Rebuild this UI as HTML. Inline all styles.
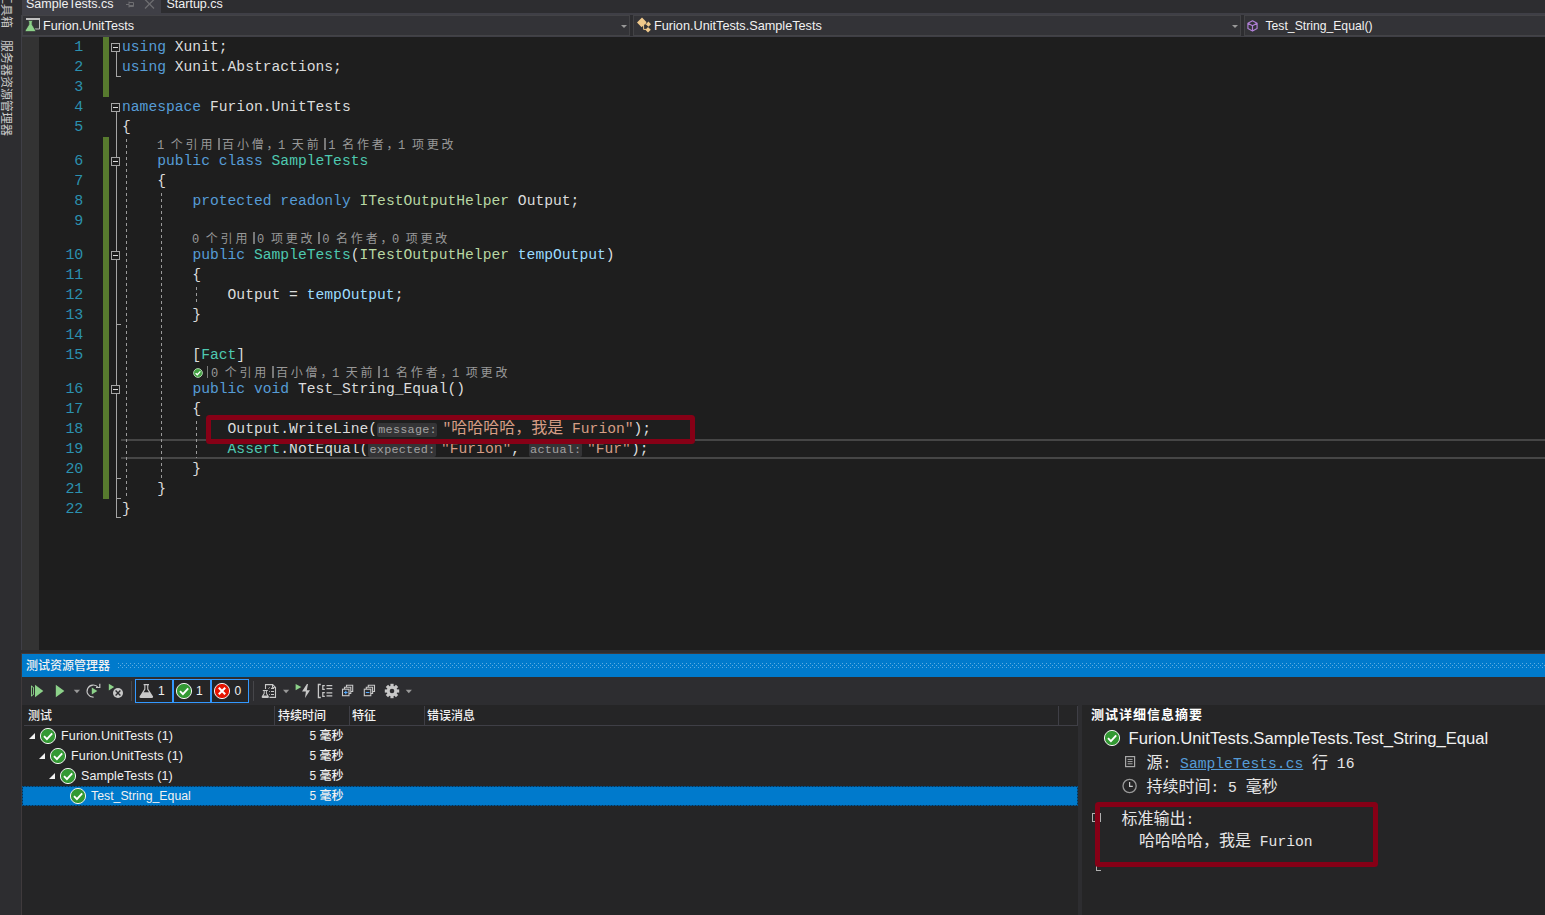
<!DOCTYPE html>
<html lang="zh-CN">
<head>
<meta charset="utf-8">
<title>SampleTests.cs</title>
<style>
*{box-sizing:border-box;margin:0;padding:0}
html,body{width:1545px;height:915px;overflow:hidden;background:#2d2d30}
body{position:relative;font-family:"Liberation Sans","Noto Sans CJK SC",sans-serif;font-size:12px;color:#f1f1f1}
.abs{position:absolute}
.ui{font-family:"Liberation Sans","Noto Sans CJK SC",sans-serif;font-size:12px;font-weight:500;color:#f1f1f1;white-space:nowrap;line-height:16px}
.mono{font-family:"Liberation Mono","Noto Sans CJK SC",monospace;white-space:pre}
/* sidebar */
#side{left:0;top:0;width:22px;height:915px;background:#2d2d30}
/* tabs */
#tabstrip{left:22px;top:0;width:1523px;height:13px;background:#2d2d30}
#tabactive{left:22px;top:0;width:139px;height:13px;background:#3f3f46}
#tabline{left:22px;top:13px;width:1523px;height:2px;background:#3f3f46}
/* navbar */
#nav{left:22px;top:15px;width:1523px;height:22px;background:#2d2d30;border-bottom:1px solid #3f3f46}
.navbox{position:absolute;top:15px;height:21px;background:#333337;border:1px solid #434346}
.arrow{position:absolute;width:0;height:0;border-left:3.5px solid transparent;border-right:3.5px solid transparent;border-top:3.5px solid #999}
/* editor */
#editor{left:22px;top:37px;width:1523px;height:613px;background:#1e1e1e}
#emargin{left:22px;top:37px;width:17px;height:613px;background:#333333}
#greenA{left:103px;top:37px;width:6px;height:60px;background:#577a2e}
#greenB{left:103px;top:137px;width:6px;height:362px;background:#577a2e}
.ln{position:absolute;left:42px;width:41px;text-align:right;color:#2b91af;font-size:15px;line-height:20px;height:20px;margin-top:1px;letter-spacing:-.2px}
.cl{position:absolute;left:122px;color:#dcdcdc;font-size:14.67px;line-height:20px;height:20px}
.lens{position:absolute;color:#999;font-size:12px;line-height:14px;height:14px;letter-spacing:2.8px;font-family:"Noto Sans CJK SC",sans-serif;white-space:pre}
.ll{font-family:"Liberation Mono",monospace;font-size:12px;letter-spacing:-0.3px}
.cm{letter-spacing:-0.5px}
.sp{display:inline-block;width:1.8px;height:12px;background:#787878;margin:0 2.5px 0 2.6px;vertical-align:-0.5px}
.cj{font-size:16px;line-height:0;font-family:"Noto Sans CJK SC",sans-serif}
.dt{font-size:14.67px;line-height:22px;color:#e6e6e6}
.k{color:#569cd6}.t{color:#4ec9b0}.i{color:#b8d7a3}.s{color:#d69d85}.p{color:#9cdcfe}
.h{display:inline-block;background:#343436;color:#a2a2a2;font-size:11.8px;line-height:15.4px;height:13.5px;padding:0 .5px 0 1.2px;margin:0 5px 0 0;border-radius:2px;vertical-align:0;letter-spacing:.25px}
.ob{position:absolute;left:111px;width:9px;height:9px;border:1px solid #a5a5a5;background:#1e1e1e}
.ob:after{content:"";position:absolute;left:1px;top:3px;width:5px;height:1px;background:#dcdcdc}
.vl{position:absolute;width:1px;background:#a5a5a5}
.hl{position:absolute;height:1px;background:#a5a5a5}
.dg{position:absolute;width:1px;background-image:linear-gradient(#9a9a9a 50%,transparent 50%);background-size:1px 6px}
/* bottom */
#gap{left:22px;top:650px;width:1523px;height:4px;background:#2d2d30}
#ttl{left:22px;top:654px;width:1523px;height:23px;background:#007acc}
#tbar{left:22px;top:677px;width:1523px;height:28px;background:#2d2d30}
#list{left:22px;top:705px;width:1056px;height:210px;background:#252526}
#split{left:1078px;top:705px;width:4px;height:210px;background:#2d2d30}
#det{left:1082px;top:705px;width:463px;height:210px;background:#252526}
.redbox{position:absolute;border:5px solid #860016;border-radius:3.5px}
</style>
</head>
<body>
<div id="side" class="abs"></div>
<div id="tabstrip" class="abs"></div>
<div id="tabactive" class="abs"></div>
<div id="tabline" class="abs"></div>
<div id="nav" class="abs"></div>
<div id="editor" class="abs"></div>
<div id="emargin" class="abs"></div>
<div id="greenA" class="abs"></div>
<div id="greenB" class="abs"></div>
<div class="abs ui" style="left:12px;top:-8px;height:13px;line-height:13px;font-size:12px;font-weight:400;color:#c8c8c8;transform-origin:0 0;transform:rotate(90deg)">工具箱<span style="display:inline-block;width:12px"></span>服务器资源管理器</div>
<div class="abs ui" style="left:26px;top:-4px;font-size:12.5px">SampleTests.cs</div>
<div class="abs ui" style="left:166.5px;top:-4px;font-size:12.5px">Startup.cs</div>
<svg class="abs" style="left:125px;top:0" width="10" height="9" viewBox="0 0 10 9"><path d="M1 4.5H4M4 1.5V7.5M4 2.5H8.5V6.5H4M4 5.5H8.5" stroke="#6d6d70" stroke-width="1" fill="none"/></svg>
<svg class="abs" style="left:144px;top:-1px" width="11" height="11" viewBox="0 0 11 11"><path d="M1 0.5L10 9.5M10 0.5L1 9.5" stroke="#6d6d70" stroke-width="1.3" fill="none"/></svg>
<div class="navbox" style="left:22px;width:608px"></div>
<div class="navbox" style="left:633px;width:608px"></div>
<div class="navbox" style="left:1244px;width:302px"></div>
<div class="arrow" style="left:620.5px;top:25px"></div>
<div class="arrow" style="left:1231.5px;top:25px"></div>
<svg class="abs" style="left:25px;top:17px" width="16" height="15" viewBox="0 0 16 15"><path d="M1.5 2H14.5V12H10" stroke="#c0c0c0" stroke-width="1" fill="none"/><path d="M1 2H15" stroke="#c0c0c0" stroke-width="2"/><path d="M3.4 3.6H7.6V4.8H7.1V7.6L10.4 13.2V14.6H0.4V13.2L3.9 7.6V4.8H3.4Z" fill="#8dd28a" stroke="#333337" stroke-width="0.7"/></svg>
<div class="abs ui" style="left:43px;top:17.5px;font-size:12.6px">Furion.UnitTests</div>
<svg class="abs" style="left:636px;top:17px" width="16" height="16" viewBox="0 0 16 16"><g fill="#f0c98b"><path d="M6 0.6L10.6 5.2L5.6 10.2L1 5.6Z"/><path d="M12.4 4.6L15 7.2L12.4 9.8L9.8 7.2Z"/><path d="M12 10L14.8 12.8L12 15.4L9.4 12.8Z"/></g><path d="M8 6.8H10M7.6 7V12.4H10" stroke="#f0c98b" stroke-width="1" fill="none"/></svg>
<div class="abs ui" style="left:654px;top:17.5px;font-size:12.7px">Furion.UnitTests.SampleTests</div>
<svg class="abs" style="left:1247px;top:19.5px" width="11" height="12" viewBox="0 0 12 13"><path d="M6 0.8L11 3.4V9.2L6 12L1 9.2V3.4Z M1 3.4L6 6.2L11 3.4M6 6.2V12" stroke="#b180d7" stroke-width="1.3" fill="none" stroke-linejoin="round"/></svg>
<div class="abs ui" style="left:1265.5px;top:17.5px;font-size:12.2px">Test_String_Equal()</div>
<!--EDITOR-->
<div class="abs" style="left:121px;top:439px;width:1424px;height:20px;border-top:2px solid #464646;border-bottom:2px solid #464646"></div>
<svg class="abs" style="left:193px;top:368px" width="10" height="10" viewBox="0 0 10 10"><circle cx="5" cy="5" r="4.4" fill="#3f9f3f" stroke="#b9d9b9" stroke-width="0.9"/><path d="M2.6 5.2 L4.3 6.8 L7.4 3.4" stroke="#fff" stroke-width="1.3" fill="none"/></svg>
<div class="ob" style="top:43px"></div>
<div class="ob" style="top:103px"></div>
<div class="ob" style="top:157px"></div>
<div class="ob" style="top:251px"></div>
<div class="ob" style="top:385px"></div>
<div class="vl" style="left:116px;top:52px;height:25px"></div>
<div class="hl" style="left:116px;top:76px;width:5px"></div>
<div class="vl" style="left:116px;top:112px;height:45px"></div>
<div class="vl" style="left:116px;top:166px;height:85px"></div>
<div class="vl" style="left:116px;top:260px;height:125px"></div>
<div class="vl" style="left:116px;top:394px;height:124px"></div>
<div class="hl" style="left:116px;top:324px;width:5px"></div>
<div class="hl" style="left:116px;top:478px;width:5px"></div>
<div class="hl" style="left:116px;top:498px;width:5px"></div>
<div class="hl" style="left:116px;top:517px;width:5px"></div>
<div class="dg" style="left:126px;top:139px;height:359px"></div>
<div class="dg" style="left:161px;top:193px;height:285px"></div>
<div class="dg" style="left:196px;top:287px;height:16px"></div>
<div class="dg" style="left:196px;top:421px;height:37px"></div>

<div class="ln mono" style="top:37px">1</div>
<div class="cl mono" style="top:37px"><span class="k">using</span> Xunit;</div>
<div class="ln mono" style="top:57px">2</div>
<div class="cl mono" style="top:57px"><span class="k">using</span> Xunit.Abstractions;</div>
<div class="ln mono" style="top:77px">3</div>
<div class="ln mono" style="top:97px">4</div>
<div class="cl mono" style="top:97px"><span class="k">namespace</span> Furion.UnitTests</div>
<div class="ln mono" style="top:117px">5</div>
<div class="cl mono" style="top:117px">{</div>
<div class="ln mono" style="top:151px">6</div>
<div class="cl mono" style="top:151px">    <span class="k">public</span> <span class="k">class</span> <span class="t">SampleTests</span></div>
<div class="ln mono" style="top:171px">7</div>
<div class="cl mono" style="top:171px">    {</div>
<div class="ln mono" style="top:191px">8</div>
<div class="cl mono" style="top:191px">        <span class="k">protected</span> <span class="k">readonly</span> <span class="i">ITestOutputHelper</span> Output;</div>
<div class="ln mono" style="top:211px">9</div>
<div class="ln mono" style="top:245px">10</div>
<div class="cl mono" style="top:245px">        <span class="k">public</span> <span class="t">SampleTests</span>(<span class="i">ITestOutputHelper</span> <span class="p">tempOutput</span>)</div>
<div class="ln mono" style="top:265px">11</div>
<div class="cl mono" style="top:265px">        {</div>
<div class="ln mono" style="top:285px">12</div>
<div class="cl mono" style="top:285px">            Output = <span class="p">tempOutput</span>;</div>
<div class="ln mono" style="top:305px">13</div>
<div class="cl mono" style="top:305px">        }</div>
<div class="ln mono" style="top:325px">14</div>
<div class="ln mono" style="top:345px">15</div>
<div class="cl mono" style="top:345px">        [<span class="t">Fact</span>]</div>
<div class="ln mono" style="top:379px">16</div>
<div class="cl mono" style="top:379px">        <span class="k">public</span> <span class="k">void</span> Test_String_Equal()</div>
<div class="ln mono" style="top:399px">17</div>
<div class="cl mono" style="top:399px">        {</div>
<div class="ln mono" style="top:419px">18</div>
<div class="cl mono" style="top:419px">            Output.WriteLine(<span class="h">message:</span><span class="s">"<span class="cj">哈哈哈哈，我是</span> Furion"</span>);</div>
<div class="ln mono" style="top:439px">19</div>
<div class="cl mono" style="top:439px">            <span class="t">Assert</span>.NotEqual(<span class="h">expected:</span><span class="s">"Furion"</span>, <span class="h">actual:</span><span class="s">"Fur"</span>);</div>
<div class="ln mono" style="top:459px">20</div>
<div class="cl mono" style="top:459px">        }</div>
<div class="ln mono" style="top:479px">21</div>
<div class="cl mono" style="top:479px">    }</div>
<div class="ln mono" style="top:499px">22</div>
<div class="cl mono" style="top:499px">}</div>
<div class="lens" style="left:157px;top:137px"><span class="ll">1 </span>个引用<span class="sp"></span>百小僧<span class="cm">，</span><span class="ll">1 </span>天前<span class="sp"></span><span class="ll">1 </span>名作者<span class="cm">，</span><span class="ll">1 </span>项更改</div>
<div class="lens" style="left:192px;top:231px"><span class="ll">0 </span>个引用<span class="sp"></span><span class="ll">0 </span>项更改<span class="sp"></span><span class="ll">0 </span>名作者<span class="cm">，</span><span class="ll">0 </span>项更改</div>
<div class="lens" style="left:204px;top:365px"><span class="sp"></span><span class="ll">0 </span>个引用<span class="sp"></span>百小僧<span class="cm">，</span><span class="ll">1 </span>天前<span class="sp"></span><span class="ll">1 </span>名作者<span class="cm">，</span><span class="ll">1 </span>项更改</div>

<div class="redbox" style="left:206px;top:415px;width:489px;height:29px"></div>
<!--/EDITOR-->
<div id="gap" class="abs"></div>
<div id="ttl" class="abs"></div>
<div id="tbar" class="abs"></div>
<div id="list" class="abs"></div>
<div id="split" class="abs"></div>
<div id="det" class="abs"></div>
<!--BOTTOM-->
<div class="abs" style="left:21px;top:15px;width:1px;height:635px;background:#3f3f46"></div>
<div class="abs" style="left:21px;top:653px;width:1524px;height:1px;background:#41393b"></div>
<div class="abs" style="left:21px;top:653px;width:1px;height:262px;background:#3f3a3c"></div>

<div class="abs ui" style="left:26px;top:657.5px">测试资源管理器</div>
<svg class="abs" style="left:118px;top:663px" width="1427" height="5"><defs><pattern id="dots" width="4" height="4" patternUnits="userSpaceOnUse"><rect x="0" y="0" width="1" height="1" fill="#5fade2"/><rect x="2" y="2" width="1" height="1" fill="#5fade2"/></pattern></defs><rect width="1427" height="5" fill="url(#dots)"/></svg>
<!-- toolbar icons -->
<svg class="abs" style="left:22px;top:677px" width="400" height="28" viewBox="22 677 400 28">
<g fill="#8dd28a">
<path d="M31 685.2V696.8L34 694.6V687.4Z M31.9 686.9L33.1 687.8V694.2L31.9 695.1Z" fill-rule="evenodd"/>
<path d="M35 684.7L43.3 691L35 697.2Z"/>
<path d="M55.8 684.7L64.4 691L55.8 697.2Z"/>
<path d="M91.8 687.5L97.3 691L91.8 694.4Z"/>
<path d="M108.8 683.8L114.2 687.1L108.8 690.4Z"/>
<path d="M295.6 683.9L301.3 687.1L295.6 690.3Z"/>
</g>
<g fill="#999"><path d="M73.8 689.8H80L76.9 693.2Z"/><path d="M283 689.8H289.2L286.1 693.2Z"/><path d="M405.7 689.8H411.9L408.8 693.2Z"/></g>
<path d="M93.6 697.2A6.1 6.1 0 1 1 98.2 687.6" stroke="#c8c8c8" stroke-width="1.2" fill="none"/>
<path d="M96 687.5H99.8V683.8" stroke="#c8c8c8" stroke-width="1.2" fill="none"/>
<circle cx="118" cy="693" r="5" fill="#c8c8c8"/><path d="M115.6 690.6L120.4 695.4M120.4 690.6L115.6 695.4" stroke="#2d2d30" stroke-width="1.4"/>
<path d="M131.5 681V701M253.5 681V701" stroke="#46464a" stroke-width="1"/>
<g><rect x="135.5" y="679.5" width="37" height="23" fill="#252526" stroke="#3399ff"/><rect x="173.5" y="679.5" width="37" height="23" fill="#252526" stroke="#3399ff"/><rect x="211.5" y="679.5" width="37" height="23" fill="#252526" stroke="#3399ff"/></g>
<path d="M143.6 684H149V685.2H148.3V689L153.1 696.6Q153.4 698 152 698H140.6Q139.2 698 139.5 696.6L144.3 689V685.2H143.6Z M145.4 685.2V689.4L143.6 692.3H149L147.2 689.4V685.2Z" fill="#c8c8c8" fill-rule="evenodd"/>
<circle cx="184" cy="691" r="7.6" fill="#339933" stroke="#f3f3f3" stroke-width="1"/><path d="M180 691.2L182.9 694.1L188.2 688.3" stroke="#fff" stroke-width="1.9" fill="none"/>
<circle cx="222" cy="691" r="7.6" fill="#e51400" stroke="#f3f3f3" stroke-width="1"/><path d="M218.8 687.8L225.2 694.2M225.2 687.8L218.8 694.2" stroke="#fff" stroke-width="2" fill="none"/>
<!-- playlist -->
<path d="M265.5 689V684.6H272.7L275.5 687.4V697.4H269.5" stroke="#c8c8c8" stroke-width="1.1" fill="none"/><path d="M272.5 684.6V687.6H275.5" stroke="#c8c8c8" stroke-width="1" fill="none"/><path d="M271 688.4H274M271 691.5H274M271 694.5H274" stroke="#c8c8c8" stroke-width="1.2"/><path d="M269.2 691.5H270M269.2 694.5H270M268.4 688.6L269.8 687.4" stroke="#c8c8c8" stroke-width="0.9"/><path d="M262.8 689.9H267.8V690.9H266.9V693.2L268.9 696.6Q269.2 698 268 698H262.6Q261.4 698 261.7 696.6L263.7 693.2V690.9H262.8Z M264.7 690.9V693.5L263.6 695.4H267L265.9 693.5V690.9Z" fill="#c8c8c8" fill-rule="evenodd"/>
<!-- lightning -->
<path d="M306.9 683.9L302 691.5H305.9L305 698L310 690.2H306.8L308 683.9Z" fill="#c8c8c8"/>
<!-- group -->
<path d="M320.8 684.5H318.4V697.5H320.8" stroke="#c8c8c8" stroke-width="1.3" fill="none"/><path d="M324.8 685.6H322.8V689.4H324.8M324.8 692.6H322.8V696.4H324.8" stroke="#c8c8c8" stroke-width="1.2" fill="none"/><path d="M326.5 685.6H332.3M326.5 688.6H332.3M326.5 692.8H332.3M326.5 695.8H332.3" stroke="#c8c8c8" stroke-width="1.2"/>
<!-- expand / collapse -->
<g stroke="#c8c8c8" stroke-width="1.1" fill="none"><path d="M346.5 687V685.3H352.7V691.5H351"/><path d="M344.5 689V687.2H350.8V693.5H349"/><rect x="342.5" y="689.2" width="6.5" height="6.5"/>
<path d="M368.3 687V685.3H374.5V691.5H372.8"/><path d="M366.3 689V687.2H372.6V693.5H370.8"/><rect x="364.3" y="689.2" width="6.5" height="6.5"/></g>
<path d="M344 692.5H347.6M345.8 690.7V694.3M365.8 692.5H369.4" stroke="#55aaff" stroke-width="1.2"/>
<!-- gear -->
<g transform="translate(392 691)"><g fill="#c8c8c8"><rect x="-1.6" y="-7.2" width="3.2" height="14.4"/><rect x="-1.6" y="-7.2" width="3.2" height="14.4" transform="rotate(45)"/><rect x="-1.6" y="-7.2" width="3.2" height="14.4" transform="rotate(90)"/><rect x="-1.6" y="-7.2" width="3.2" height="14.4" transform="rotate(135)"/><circle r="5.2"/></g><circle r="2.3" fill="#2d2d30"/></g>
</svg>
<div class="abs ui" style="left:158px;top:683px">1</div>
<div class="abs ui" style="left:196px;top:683px">1</div>
<div class="abs ui" style="left:234.5px;top:683px">0</div>
<!-- list header -->
<div class="abs" style="left:24px;top:725px;width:1054px;height:1px;background:#3f3f46"></div>
<div class="abs" style="left:274px;top:706px;width:1px;height:19px;background:#3f3f46"></div>
<div class="abs" style="left:349px;top:706px;width:1px;height:19px;background:#3f3f46"></div>
<div class="abs" style="left:424px;top:706px;width:1px;height:19px;background:#3f3f46"></div>
<div class="abs" style="left:1058px;top:706px;width:1px;height:19px;background:#3f3f46"></div>
<div class="abs" style="left:1077px;top:706px;width:1px;height:19px;background:#3f3f46"></div>
<div class="abs ui" style="left:28px;top:707.5px">测试</div>
<div class="abs ui" style="left:278px;top:707.5px">持续时间</div>
<div class="abs ui" style="left:352px;top:707.5px">特征</div>
<div class="abs ui" style="left:427px;top:707.5px">错误消息</div>
<!-- rows -->
<svg class="abs" style="left:22px;top:786px" width="1056" height="20"><rect width="1056" height="20" fill="#007acc"/><rect x="0.5" y="0.5" width="1055" height="19" fill="none" stroke="#083050" stroke-width="1" stroke-dasharray="2 1"/></svg>
<svg class="abs" style="left:22px;top:726px" width="80" height="80" viewBox="22 726 80 80">
<g fill="#f1f1f1"><path d="M35 733V739H29Z"/><path d="M45 753V759H39Z"/><path d="M55 773V779H49Z"/></g>
<g id="ck"><circle cx="48" cy="736" r="7.6" fill="#339933" stroke="#f3f3f3" stroke-width="1"/><path d="M44 736.2L46.9 739.1L52.2 733.3" stroke="#fff" stroke-width="1.9" fill="none"/></g>
<use href="#ck" x="10" y="20"/><use href="#ck" x="20" y="40"/><use href="#ck" x="30" y="60"/>
</svg>
<div class="abs ui" style="left:61px;top:727.5px;font-size:12.5px;letter-spacing:.15px">Furion.UnitTests (1)</div>
<div class="abs ui" style="left:71px;top:747.5px;font-size:12.5px;letter-spacing:.15px">Furion.UnitTests (1)</div>
<div class="abs ui" style="left:81px;top:767.5px;font-size:12.5px;letter-spacing:.1px">SampleTests (1)</div>
<div class="abs ui" style="left:91px;top:787.5px;font-size:12.3px">Test_String_Equal</div>
<div class="abs ui" style="left:309.5px;top:727.5px">5 毫秒</div>
<div class="abs ui" style="left:309.5px;top:747.5px">5 毫秒</div>
<div class="abs ui" style="left:309.5px;top:767.5px">5 毫秒</div>
<div class="abs ui" style="left:309.5px;top:787.5px">5 毫秒</div>
<!-- details -->
<div class="abs ui" style="left:1091px;top:706.5px;font-weight:bold;font-size:13px;letter-spacing:1px;color:#fff">测试详细信息摘要</div>
<svg class="abs" style="left:1103px;top:729px" width="18" height="18" viewBox="0 0 18 18"><circle cx="9" cy="9" r="7.6" fill="#339933" stroke="#f3f3f3" stroke-width="1"/><path d="M5 9.2L7.9 12.1L13.2 6.3" stroke="#fff" stroke-width="1.9" fill="none"/></svg>
<div class="abs ui" style="left:1128.5px;top:727.5px;font-size:16.65px;line-height:22px">Furion.UnitTests.SampleTests.Test_String_Equal</div>
<svg class="abs" style="left:1124px;top:755px" width="13" height="13" viewBox="0 0 13 13"><rect x="1.6" y="1.6" width="9" height="10" fill="none" stroke="#a8a8a8" stroke-width="1.2"/><path d="M3.6 4.4H8.6M3.6 6.6H8.6M3.6 8.8H8.6" stroke="#a8a8a8" stroke-width="1"/></svg>
<div class="abs mono dt" style="left:1146.5px;top:753px"><span class="cj">源</span>: <span style="color:#569cd6;text-decoration:underline">SampleTests.cs</span> <span class="cj">行</span> 16</div>
<svg class="abs" style="left:1122px;top:778px" width="16" height="16" viewBox="0 0 16 16"><circle cx="7.6" cy="8" r="6.6" fill="none" stroke="#999" stroke-width="1.3"/><path d="M7.6 4V8.4H10.8" stroke="#c8c8c8" stroke-width="1.2" fill="none"/></svg>
<div class="abs mono dt" style="left:1146.5px;top:777px"><span class="cj">持续时间</span>: 5 <span class="cj">毫秒</span></div>
<div class="abs" style="left:1092px;top:813px;width:9px;height:9px;border:1px solid #b0b0b0"></div>
<div class="abs" style="left:1095px;top:817px;width:3px;height:1px;background:#bbb"></div>
<div class="abs" style="left:1096px;top:865px;width:5px;height:6px;border-left:1px solid #b0b0b0;border-bottom:1px solid #b0b0b0"></div>
<div class="abs mono dt" style="left:1121.5px;top:808.5px"><span class="cj">标准输出</span>:</div>
<div class="abs mono dt" style="left:1139px;top:831px"><span class="cj">哈哈哈哈，我是</span> Furion</div>
<div class="redbox" style="left:1095px;top:802px;width:283px;height:65px"></div>
<!--/BOTTOM-->
</body>
</html>
